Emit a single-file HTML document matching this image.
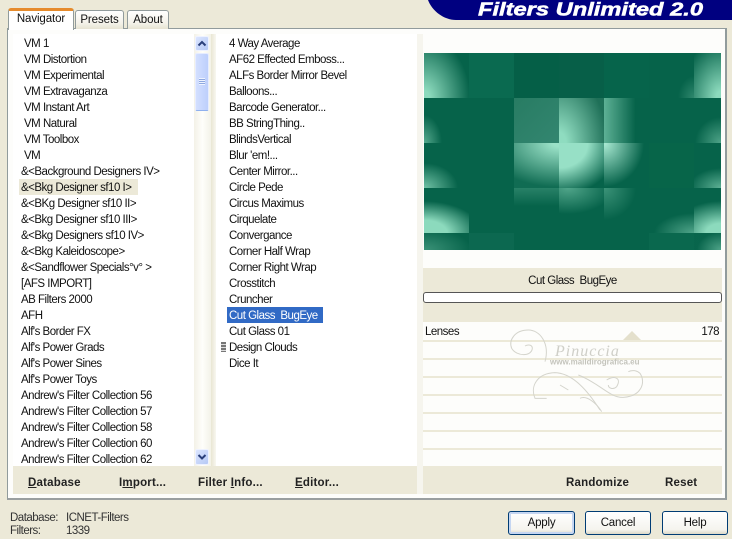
<!DOCTYPE html>
<html><head><meta charset="utf-8"><style>
html,body{margin:0;padding:0}
body{width:732px;height:539px;overflow:hidden;background:#ece9d8;position:relative;font-family:"Liberation Sans",sans-serif;font-size:11.5px;color:#111;letter-spacing:-.5px}
.a{position:absolute;white-space:pre}
.list{position:absolute;margin:0;padding:0;list-style:none}
.list div{height:16px;line-height:16px;white-space:pre}
.list div.i{padding-left:3px}
.tab{position:absolute;box-sizing:border-box;border:1px solid #919b9c;border-bottom:0;border-radius:3px 3px 0 0;background:linear-gradient(#fff,#f3f1e8 70%,#e6e3d2);text-align:center;font-size:11.5px;letter-spacing:-.1px}
.btn{position:absolute;box-sizing:border-box;height:24px;top:511px;border:1px solid #003c74;border-radius:3px;background:linear-gradient(#fff,#f5f4ee 80%,#dcd8c8);text-align:center;line-height:22px;font-size:11.5px;letter-spacing:-.2px}
.b{font-weight:bold;font-size:11.5px;color:#222;letter-spacing:.2px}
.t{position:absolute;width:45px;height:45px}
.ln{position:absolute;left:423px;width:299px;height:2px;background:#ece9d8}
</style></head><body>

<svg class="a" style="left:420px;top:0" width="312" height="24" viewBox="0 0 312 24"><path d="M8 0C12 11 24 20 36 20H312V0Z" fill="#000080"/><text x="58" y="15.5" font-family="Liberation Sans" font-size="18" font-weight="bold" font-style="italic" fill="#fff" stroke="#fff" stroke-width=".5" textLength="225" lengthAdjust="spacingAndGlyphs" letter-spacing="0">Filters Unlimited 2.0</text></svg>

<div class="a" style="left:7px;top:28px;width:720px;height:472px;box-sizing:border-box;border:1px solid #919b9c;border-right:2px solid #919b9c;border-bottom:2px solid #9a9fa0;background:#fdfdfb"></div>

<div class="tab" style="left:75px;top:10px;width:49px;height:19px;line-height:19px">Presets</div>
<div class="tab" style="left:127px;top:10px;width:42px;height:19px;line-height:19px">About</div>
<div class="tab" style="left:8px;top:8px;width:66px;height:22px;line-height:16px;background:#fff;border-color:#919b9c;border-top:3px solid #e68b2c;border-bottom:0">Navigator</div>

<div class="a" style="left:13px;top:34px;width:181px;height:432px;background:#fff"></div>
<div class="a" style="left:194px;top:34px;width:17px;height:432px;background:linear-gradient(90deg,#f3f1e7,#fefefb 50%,#f3f2e8)"></div>
<div class="a" style="left:211px;top:34px;width:5px;height:432px;background:linear-gradient(90deg,#e9e6d3,#f8f7f0)"></div>
<div class="a" style="left:216px;top:34px;width:201px;height:432px;background:#fff"></div>
<div class="a" style="left:417px;top:34px;width:6px;height:460px;background:#f6f5ee"></div>

<div class="a" style="left:19px;top:179px;width:119px;height:16px;background:#ece9d8"></div>
<div class="list" style="left:21px;top:36px">
<div class="i">VM 1</div><div class="i">VM Distortion</div><div class="i">VM Experimental</div><div class="i">VM Extravaganza</div><div class="i">VM Instant Art</div><div class="i">VM Natural</div><div class="i">VM Toolbox</div><div class="i">VM</div>
<div>&amp;&lt;Background Designers IV&gt;</div><div>&amp;&lt;Bkg Designer sf10 I&gt;</div><div>&amp;&lt;BKg Designer sf10 II&gt;</div><div>&amp;&lt;Bkg Designer sf10 III&gt;</div><div>&amp;&lt;Bkg Designers sf10 IV&gt;</div><div>&amp;&lt;Bkg Kaleidoscope&gt;</div><div>&amp;&lt;Sandflower Specials°v° &gt;</div><div>[AFS IMPORT]</div><div>AB Filters 2000</div><div>AFH</div><div>Alf's Border FX</div><div>Alf's Power Grads</div><div>Alf's Power Sines</div><div>Alf's Power Toys</div><div>Andrew's Filter Collection 56</div><div>Andrew's Filter Collection 57</div><div>Andrew's Filter Collection 58</div><div>Andrew's Filter Collection 60</div><div>Andrew's Filter Collection 62</div>
</div>

<!-- scrollbar -->
<div class="a" style="left:195px;top:36px;width:14px;height:15px;border-radius:2px;background:linear-gradient(135deg,#dbe5ff,#b6c9f5);border:1px solid #eef2ff;box-sizing:border-box"></div>
<svg class="a" style="left:195px;top:36px" width="14" height="15"><path d="M3.5 9.5L7 6L10.500 9.500" fill="none" stroke="#2a3f7a" stroke-width="2"/></svg>
<div class="a" style="left:195px;top:53px;width:14px;height:58px;box-sizing:border-box;border-radius:2px;background:linear-gradient(90deg,#d3dfff,#bdcffc);border:1px solid #e6ecff;border-bottom:1px solid #8fb0ee"></div>
<div class="a" style="left:199px;top:78px;width:6px;height:7px;background:repeating-linear-gradient(#eef3ff 0 1px,#8ea8e0 1px 2px)"></div>
<div class="a" style="left:195px;top:449px;width:14px;height:16px;border-radius:2px;background:linear-gradient(135deg,#dbe5ff,#b6c9f5);border:1px solid #eef2ff;box-sizing:border-box"></div>
<svg class="a" style="left:195px;top:449px" width="14" height="16"><path d="M3.5 6L7 9.500L10.500 6" fill="none" stroke="#2a3f7a" stroke-width="2"/></svg>

<div class="a" style="left:227px;top:307px;width:96px;height:16px;background:#316ac5"></div>
<div class="list" style="left:229px;top:36px">
<div>4 Way Average</div><div>AF62 Effected Emboss...</div><div>ALFs Border Mirror Bevel</div><div>Balloons...</div><div>Barcode Generator...</div><div>BB StringThing..</div><div>BlindsVertical</div><div>Blur 'em!...</div><div>Center Mirror...</div><div>Circle Pede</div><div>Circus Maximus</div><div>Cirquelate</div><div>Convergance</div><div>Corner Half Wrap</div><div>Corner Right Wrap</div><div>Crosstitch</div><div>Cruncher</div><div style="color:#fff">Cut Glass  BugEye</div><div>Cut Glass 01</div><div>Design Clouds</div><div>Dice It</div>
</div>
<div class="a" style="left:221px;top:342px;width:5px;height:10px;background:repeating-linear-gradient(#777 0 2px,#ddd 2px 3px)"></div>
<div class="a" style="left:13px;top:466px;width:404px;height:28px;background:#ece9d8"></div>
<div class="a b" style="left:28px;top:477px"><u>D</u>atabase</div>
<div class="a b" style="left:119px;top:477px">I<u>m</u>port...</div>
<div class="a b" style="left:198px;top:477px">Filter <u>I</u>nfo...</div>
<div class="a b" style="left:295px;top:477px"><u>E</u>ditor...</div>

<!-- preview -->
<div class="a" style="left:424px;top:53px;width:297px;height:197px;background:#06634a;overflow:hidden">
<i class="t" style="left:0;top:0;background:radial-gradient(ellipse 46px 62px at 0 100%,#8cdabd 12%,rgba(140,218,189,0))"></i>
<i class="t" style="left:45px;top:0;background:#0a6a50"></i>
<i class="t" style="left:90px;top:0;background:#055f47"></i>
<i class="t" style="left:135px;top:0;background:#075f48"></i>
<i class="t" style="left:180px;top:0;background:#06644b"></i>
<i class="t" style="left:225px;top:0;background:radial-gradient(ellipse 16px 22px at 100% 100%,rgba(140,218,189,.3),rgba(140,218,189,0))"></i>
<i class="t" style="left:270px;top:0;width:27px;background:radial-gradient(ellipse 40px 58px at 100% 100%,#8cdabd 12%,rgba(140,218,189,0))"></i>

<i class="t" style="left:0;top:45px;background:radial-gradient(ellipse 18px 28px at 0 100%,rgba(140,218,189,.6),rgba(140,218,189,0))"></i>
<i class="t" style="left:90px;top:45px;background:linear-gradient(135deg,#287c63,#338670)"></i>
<i class="t" style="left:135px;top:45px;background:radial-gradient(ellipse 48px 72px at 0 100%,#8fdcc0 15%,#1f7058)"></i>
<i class="t" style="left:180px;top:45px;background:linear-gradient(90deg,rgba(140,218,189,.65),rgba(140,218,189,0) 70%)"></i>
<i class="t" style="left:270px;top:45px;width:27px;background:radial-gradient(ellipse 26px 26px at 100% 100%,rgba(140,218,189,.55),rgba(140,218,189,0))"></i>

<i class="t" style="left:0;top:90px;background:radial-gradient(ellipse 34px 25px at 0 100%,rgba(140,218,189,.8),rgba(140,218,189,0))"></i>
<i class="t" style="left:90px;top:90px;background:radial-gradient(ellipse 75px 44px at 100% 0,#9be2c8 8%,rgba(140,218,189,.08))"></i>
<i class="t" style="left:135px;top:90px;background:radial-gradient(ellipse 60px 52px at 0 0,#97e0c6 48%,rgba(140,218,189,0))"></i>
<i class="t" style="left:180px;top:90px;background:radial-gradient(ellipse 40px 44px at 0 0,#a5e6cf 5%,rgba(140,218,189,0))"></i>
<i class="t" style="left:225px;top:90px;background:#076549"></i>
<i class="t" style="left:270px;top:90px;width:27px;background:radial-gradient(ellipse 32px 20px at 100% 100%,rgba(140,218,189,.65),rgba(140,218,189,0))"></i>

<i class="t" style="left:0;top:135px;background:radial-gradient(ellipse 58px 32px at 0 100%,#8cdabd 40%,rgba(140,218,189,0))"></i>
<i class="t" style="left:90px;top:135px;background:linear-gradient(rgba(140,218,189,.25),rgba(140,218,189,0) 40%)"></i>
<i class="t" style="left:135px;top:135px;background:radial-gradient(ellipse 45px 26px at 20% 0,rgba(140,218,189,.55),rgba(140,218,189,0))"></i>
<i class="t" style="left:180px;top:135px;background:radial-gradient(circle 32px at 0 0,rgba(140,218,189,.4),rgba(140,218,189,0))"></i>
<i class="t" style="left:225px;top:135px;background:radial-gradient(ellipse 40px 20px at 100% 100%,rgba(140,218,189,.55),rgba(140,218,189,0))"></i>
<i class="t" style="left:270px;top:135px;width:27px;background:radial-gradient(ellipse 50px 32px at 100% 100%,#8cdabd 30%,rgba(140,218,189,0))"></i>

<i class="t" style="left:0;top:180px;height:17px;background:radial-gradient(ellipse 48px 22px at 0 100%,rgba(140,218,189,.4),rgba(140,218,189,0))"></i>
<i class="t" style="left:45px;top:180px;height:17px;background:rgba(140,218,189,.05)"></i>
<i class="t" style="left:225px;top:180px;height:17px;background:rgba(140,218,189,.04)"></i>
<i class="t" style="left:270px;top:180px;width:27px;height:17px;background:radial-gradient(ellipse 24px 18px at 100% 100%,rgba(140,218,189,.55),rgba(140,218,189,.02))"></i>
</div>

<!-- right column -->
<div class="a" style="left:423px;top:268px;width:299px;height:54px;background:#ece9d8"></div>
<div class="a" style="left:423px;top:273px;width:299px;text-align:center;line-height:16px">Cut Glass  BugEye</div>
<div class="a" style="left:423px;top:292px;width:299px;height:11px;box-sizing:border-box;border:1px solid #555;border-radius:3px;background:#fff"></div>
<div class="a" style="left:425px;top:324px;line-height:16px">Lenses</div>
<div class="a" style="left:680px;width:39px;text-align:right;top:324px;line-height:16px">178</div>
<div class="ln" style="top:340px"></div><div class="ln" style="top:358px"></div><div class="ln" style="top:376px"></div><div class="ln" style="top:394px"></div><div class="ln" style="top:412px"></div><div class="ln" style="top:430px"></div><div class="ln" style="top:448px"></div>
<svg class="a" style="left:622px;top:330px" width="20" height="11"><path d="M10 1L19 10H1Z" fill="#e4e0cc"/></svg>
<svg class="a" style="left:500px;top:320px" width="160" height="100" viewBox="0 0 480 300" fill="none" stroke="#d4d4cc" stroke-width="3">
<path d="M135 125C150 70 120 30 85 30C45 30 25 60 35 85C50 110 95 110 97 85C97 75 85 72 75 78"/>
<path d="M140 235H105C90 200 110 160 165 158C220 160 265 215 300 270"/>
<path d="M235 165C300 190 330 235 370 232C420 230 440 190 420 160C410 150 395 150 385 155"/>
<path d="M320 180C345 165 365 175 350 200C340 210 325 205 325 195"/>
<path d="M180 195L205 210M240 235C260 225 290 250 305 275"/>
<text x="165" y="108" font-family="Liberation Serif" font-style="italic" font-size="48" stroke="none" fill="#cfcfc8" letter-spacing="3">Pinuccia</text>
<text x="150" y="134" font-family="Liberation Sans" font-size="24" font-weight="bold" stroke="none" fill="#c4c4bc" letter-spacing="0">www.maildirografica.eu</text>
</svg>
<div class="a" style="left:423px;top:466px;width:299px;height:28px;background:#ece9d8"></div>
<div class="a b" style="left:566px;top:477px">Randomize</div>
<div class="a b" style="left:665px;top:477px">Reset</div>

<!-- status -->
<div class="a" style="left:10px;top:511px;line-height:14px;color:#333">Database:</div>
<div class="a" style="left:66px;top:511px;line-height:14px;color:#333">ICNET-Filters</div>
<div class="a" style="left:10px;top:524px;line-height:14px;color:#333">Filters:</div>
<div class="a" style="left:66px;top:524px;line-height:14px;color:#333">1339</div>
<div class="btn" style="left:508px;width:67px;box-shadow:inset 0 0 0 2px #c5d6f2">Apply</div>
<div class="btn" style="left:585px;width:66px">Cancel</div>
<div class="btn" style="left:662px;width:66px">Help</div>
</body></html>
